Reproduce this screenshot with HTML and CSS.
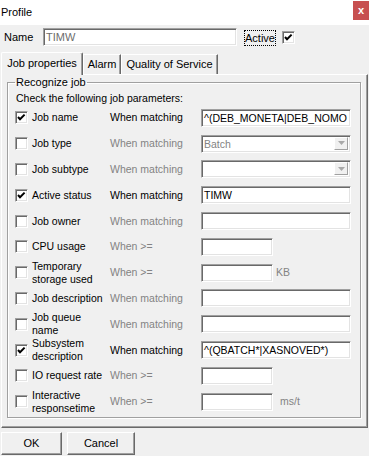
FILE: index.html
```html
<!DOCTYPE html>
<html>
<head>
<meta charset="utf-8">
<link rel="stylesheet" href="styles.css">
</head>
<body>
<div class="titlebar">
  <span class="title">Profile</span>
  <span class="close">x</span>
</div>
<div class="namerow">
  <span class="namelabel">Name</span>
  <div class="field namefield">TIMW</div>
  <span class="activelabel">Active</span>
  <span class="cb checked"><svg width="9" height="9" viewBox="0 0 9 9"><polyline points="1,4 3,6.2 7.6,1.6" fill="none" stroke="#000" stroke-width="2"/></svg></span>
</div>
<div class="tabs">
  <div class="tab sel w1">Job properties</div>
  <div class="tab w2">Alarm</div>
  <div class="tab w3">Quality of Service</div>
</div>
<div class="panel">
  <fieldset class="group">
    <legend>Recognize job</legend>
    <div class="hint">Check the following job parameters:</div>

    <div class="row">
      <span class="cb checked"><svg width="9" height="9" viewBox="0 0 9 9"><polyline points="1,4 3,6.2 7.6,1.6" fill="none" stroke="#000" stroke-width="2"/></svg></span>
      <span class="lbl">Job name</span>
      <span class="cond">When matching</span>
      <div class="field long">^(DEB_MONETA|DEB_NOMO</div>
    </div>
    <div class="row">
      <span class="cb"></span>
      <span class="lbl">Job type</span>
      <span class="cond off">When matching</span>
      <div class="field long combo"><span class="val off">Batch</span><span class="arrow"><svg width="7" height="4" viewBox="0 0 7 4"><polygon points="0,0 7,0 3.5,4" fill="#a8a8a8"/></svg></span></div>
    </div>
    <div class="row">
      <span class="cb"></span>
      <span class="lbl">Job subtype</span>
      <span class="cond off">When matching</span>
      <div class="field long combo"><span class="val"></span><span class="arrow"><svg width="7" height="4" viewBox="0 0 7 4"><polygon points="0,0 7,0 3.5,4" fill="#a8a8a8"/></svg></span></div>
    </div>
    <div class="row">
      <span class="cb checked"><svg width="9" height="9" viewBox="0 0 9 9"><polyline points="1,4 3,6.2 7.6,1.6" fill="none" stroke="#000" stroke-width="2"/></svg></span>
      <span class="lbl">Active status</span>
      <span class="cond">When matching</span>
      <div class="field long">TIMW</div>
    </div>
    <div class="row">
      <span class="cb"></span>
      <span class="lbl">Job owner</span>
      <span class="cond off">When matching</span>
      <div class="field long"></div>
    </div>
    <div class="row">
      <span class="cb"></span>
      <span class="lbl">CPU usage</span>
      <span class="cond off">When &gt;=</span>
      <div class="field short"></div>
    </div>
    <div class="row">
      <span class="cb"></span>
      <span class="lbl">Temporary<br>storage used</span>
      <span class="cond off">When &gt;=</span>
      <div class="field short"></div>
      <span class="unit off">KB</span>
    </div>
    <div class="row">
      <span class="cb"></span>
      <span class="lbl">Job description</span>
      <span class="cond off">When matching</span>
      <div class="field long"></div>
    </div>
    <div class="row">
      <span class="cb"></span>
      <span class="lbl">Job queue<br>name</span>
      <span class="cond off">When matching</span>
      <div class="field long"></div>
    </div>
    <div class="row">
      <span class="cb checked"><svg width="9" height="9" viewBox="0 0 9 9"><polyline points="1,4 3,6.2 7.6,1.6" fill="none" stroke="#000" stroke-width="2"/></svg></span>
      <span class="lbl">Subsystem<br>description</span>
      <span class="cond">When matching</span>
      <div class="field long">^(QBATCH*|XASNOVED*)</div>
    </div>
    <div class="row">
      <span class="cb"></span>
      <span class="lbl">IO request rate</span>
      <span class="cond off">When &gt;=</span>
      <div class="field short"></div>
    </div>
    <div class="row">
      <span class="cb"></span>
      <span class="lbl">Interactive<br>responsetime</span>
      <span class="cond off">When &gt;=</span>
      <div class="field short"></div>
      <span class="unit unit2 off">ms/t</span>
    </div>
  </fieldset>
</div>
<div class="footer">
  <div class="btn ok">OK</div>
  <div class="btn cancel">Cancel</div>
</div>
</body>
</html>
```
FILE: styles.css
```css
html, body {
  margin: 0;
  padding: 0;
}
body {
  width: 369px;
  height: 456px;
  overflow: hidden;
  background: #f0f0f0;
  font-family: "Liberation Sans", Arial, sans-serif;
  font-size: 10.5px;
  line-height: 13px;
  color: #000;
}
.titlebar {
  height: 25px;
  background: #fff;
  display: flex;
  justify-content: space-between;
  align-items: flex-start;
}
.title {
  margin: 6px 0 0 1px;
  font-size: 11px;
}
.close {
  width: 16px;
  height: 19px;
  margin-top: 1px;
  background: #c75050;
  color: #fff;
  font-weight: bold;
  font-size: 11px;
  line-height: 18px;
  text-align: center;
}
.namerow {
  display: flex;
  align-items: center;
  padding: 3px 0 0 4px;
  height: 18px;
  font-size: 11px;
}
.namelabel {
  width: 39px;
}
.field {
  box-sizing: border-box;
  height: 18px;
  background: #fff;
  border: 1px solid;
  border-color: #a0a0a0 #fff #fff #a0a0a0;
  box-shadow: inset 1px 1px #696969, inset -1px -1px #e3e3e3;
  padding: 2px 1px 0 2px;
  line-height: 13px;
  white-space: nowrap;
  overflow: hidden;
}
.namefield {
  width: 194px;
  color: #6d6d6d;
}
.activelabel {
  margin-left: 7px;
  box-sizing: border-box;
  height: 16px;
  width: 32px;
  border: 1px dotted #000;
  line-height: 14px;
  padding-left: 0;
  margin-top: 1px;
}
.namerow .cb {
  margin-left: 6px;
}
.cb {
  flex: none;
  box-sizing: border-box;
  width: 13px;
  height: 13px;
  background: #fff;
  border: 1px solid;
  border-color: #a0a0a0 #fff #fff #a0a0a0;
  box-shadow: inset 1px 1px #696969, inset -1px -1px #e3e3e3;
  display: flex;
  align-items: center;
  justify-content: center;
}
.cb svg {
  display: block;
}
.tabs {
  margin-top: 6px;
  height: 22px;
  display: flex;
  align-items: flex-end;
  padding-left: 1px;
  font-size: 11px;
}
.tab {
  box-sizing: border-box;
  height: 20px;
  border-top: 1px solid #fff;
  border-left: 1px solid #fff;
  border-right: 1px solid #696969;
  box-shadow: inset -1px 0 #a0a0a0;
  display: flex;
  align-items: flex-end;
  padding: 0 0 3px 0;
  justify-content: center;
  background: #f0f0f0;
}
.tab.sel {
  height: 23px;
  margin-bottom: -1px;
  padding-bottom: 5px;
  position: relative;
  z-index: 1;
  border-top-left-radius: 2px;
  border-top-right-radius: 2px;
}
.w1 { width: 82px; }
.w2 { width: 38px; }
.w3 { width: 97px; }
.panel {
  box-sizing: border-box;
  margin: 0 1px 0 1px;
  height: 354px;
  border-top: 1px solid #fff;
  border-left: 1px solid #fff;
  border-right: 1px solid #696969;
  border-bottom: 1px solid #696969;
  box-shadow: inset -1px -1px #a0a0a0;
  padding: 0 6px 0 5px;
}
.group {
  margin: 0;
  border: 1px solid #a0a0a0;
  box-shadow: 1px 1px #fff, inset 1px 1px #fff;
  padding: 0 8px 2px 7px;
  min-width: 0;
}
.group legend {
  padding: 0 1px;
  line-height: 14px;
  font-size: 11px;
}
.hint {
  padding: 3px 0 0 1px;
  line-height: 13px;
}
.row {
  height: 25.8px;
  display: flex;
  align-items: center;
}
.lbl {
  width: 78px;
  margin-left: 4px;
  line-height: 13px;
}
.cond {
  width: 91px;
}
.off {
  color: #838383;
}
.long {
  width: 150px;
}
.short {
  width: 72px;
}
.combo {
  display: flex;
  justify-content: space-between;
  align-items: flex-start;
  padding: 2px 2px 0 2px;
}
.arrow {
  box-sizing: border-box;
  width: 14px;
  height: 13px;
  margin-top: -1px;
  background: #f0f0f0;
  border: 1px solid;
  border-color: #fff #a0a0a0 #a0a0a0 #fff;
  display: flex;
  align-items: center;
  justify-content: center;
}
.unit {
  margin-left: 3px;
}
.unit2 {
  margin-left: 7px;
}
.footer {
  display: flex;
  padding: 4px 0 0 1px;
  font-size: 11px;
}
.btn {
  box-sizing: border-box;
  height: 23px;
  border: 1px solid;
  border-color: #fff #696969 #696969 #fff;
  box-shadow: inset -1px -1px #a0a0a0;
  display: flex;
  align-items: center;
  justify-content: center;
}
.ok {
  width: 61px;
}
.cancel {
  width: 68px;
  margin-left: 5px;
}
```
